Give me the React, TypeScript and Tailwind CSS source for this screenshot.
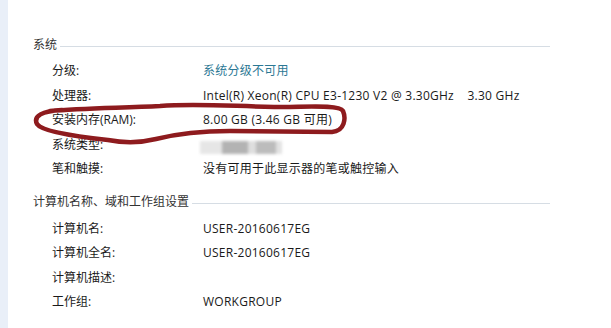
import React from 'react';

type Row = { label: string; value?: React.ReactNode };

const font = 'font-["Segoe_UI","Open_Sans","Noto_Sans_CJK_SC",sans-serif]';

const systemRows: Row[] = [
  { label: '分级:', value: <span className="text-[#2b7894]">系统分级不可用</span> },
  { label: '处理器:', value: <span className="whitespace-pre">Intel(R) Xeon(R) CPU E3-1230 V2 @ 3.30GHz    3.30 GHz</span> },
  { label: '安装内存(RAM):', value: '8.00 GB (3.46 GB 可用)' },
  {
    label: '系统类型:',
    value: (
      <div className="flex h-[13px] mt-[6px] -ml-[3px] blur-[1.5px]">
        <div className="w-[22px] bg-[#e6e6e6]" />
        <div className="w-[26px] bg-[#b3b3b3]" />
        <div className="w-[8px] bg-[#dedede]" />
        <div className="w-[20px] bg-[#bcbcbc]" />
        <div className="w-[6px] bg-[#e2e2e2]" />
      </div>
    ),
  },
  { label: '笔和触摸:', value: '没有可用于此显示器的笔或触控输入' },
];

const computerRows: Row[] = [
  { label: '计算机名:', value: 'USER-20160617EG' },
  { label: '计算机全名:', value: 'USER-20160617EG' },
  { label: '计算机描述:' },
  { label: '工作组:', value: 'WORKGROUP' },
];

const Heading: React.FC<{ title: string }> = ({ title }) => (
  <div className="flex items-center h-[16px] gap-[3px]">
    <span className="text-[#333]">{title}</span>
    <div className="flex-1 h-px bg-[#d6dde4] mt-[3px]" />
  </div>
);

const Rows: React.FC<{ rows: Row[] }> = ({ rows }) => (
  <div className="pl-[19px]">
    {rows.map((r) => (
      <div key={r.label} className="flex items-center h-[24.5px]">
        <div className="w-[151px] shrink-0">{r.label}</div>
        <div className="tracking-[0.25px]">{r.value}</div>
      </div>
    ))}
  </div>
);

export default function App() {
  return (
    <div className={`relative w-[611px] h-[328px] bg-white flex overflow-hidden text-[12px] text-[#1a1a1a] ${font}`}>
      <div className="w-[8px] bg-[#e9eff8]" />
      <div className="flex-1 pl-[25px] pr-[61px] pt-[37px]">
        <Heading title="系统" />
        <div className="mt-[6px]">
          <Rows rows={systemRows} />
        </div>
        <div className="mt-[12px]">
          <Heading title="计算机名称、域和工作组设置" />
        </div>
        <div className="mt-[7px]">
          <Rows rows={computerRows} />
        </div>
      </div>

      {/* hand-drawn red annotation */}
      <svg className="absolute left-0 top-0 pointer-events-none" width="611" height="328" viewBox="0 0 611 328">
        <path
          d="M 62 110 C 42 111, 33 116, 37 124 C 42 132, 80 137, 108 140 C 124 143, 140 143, 156 139 C 176 134, 196 131, 230 131 L 332 132 C 345 131, 346 118, 343 111 C 340 106, 322 106, 290 107 C 240 107, 200 103, 160 106 C 120 108, 82 108, 50 111"
          fill="none"
          stroke="#8e1b1e"
          strokeWidth="4.5"
          strokeLinecap="round"
          strokeLinejoin="round"
        />
      </svg>
    </div>
  );
}
